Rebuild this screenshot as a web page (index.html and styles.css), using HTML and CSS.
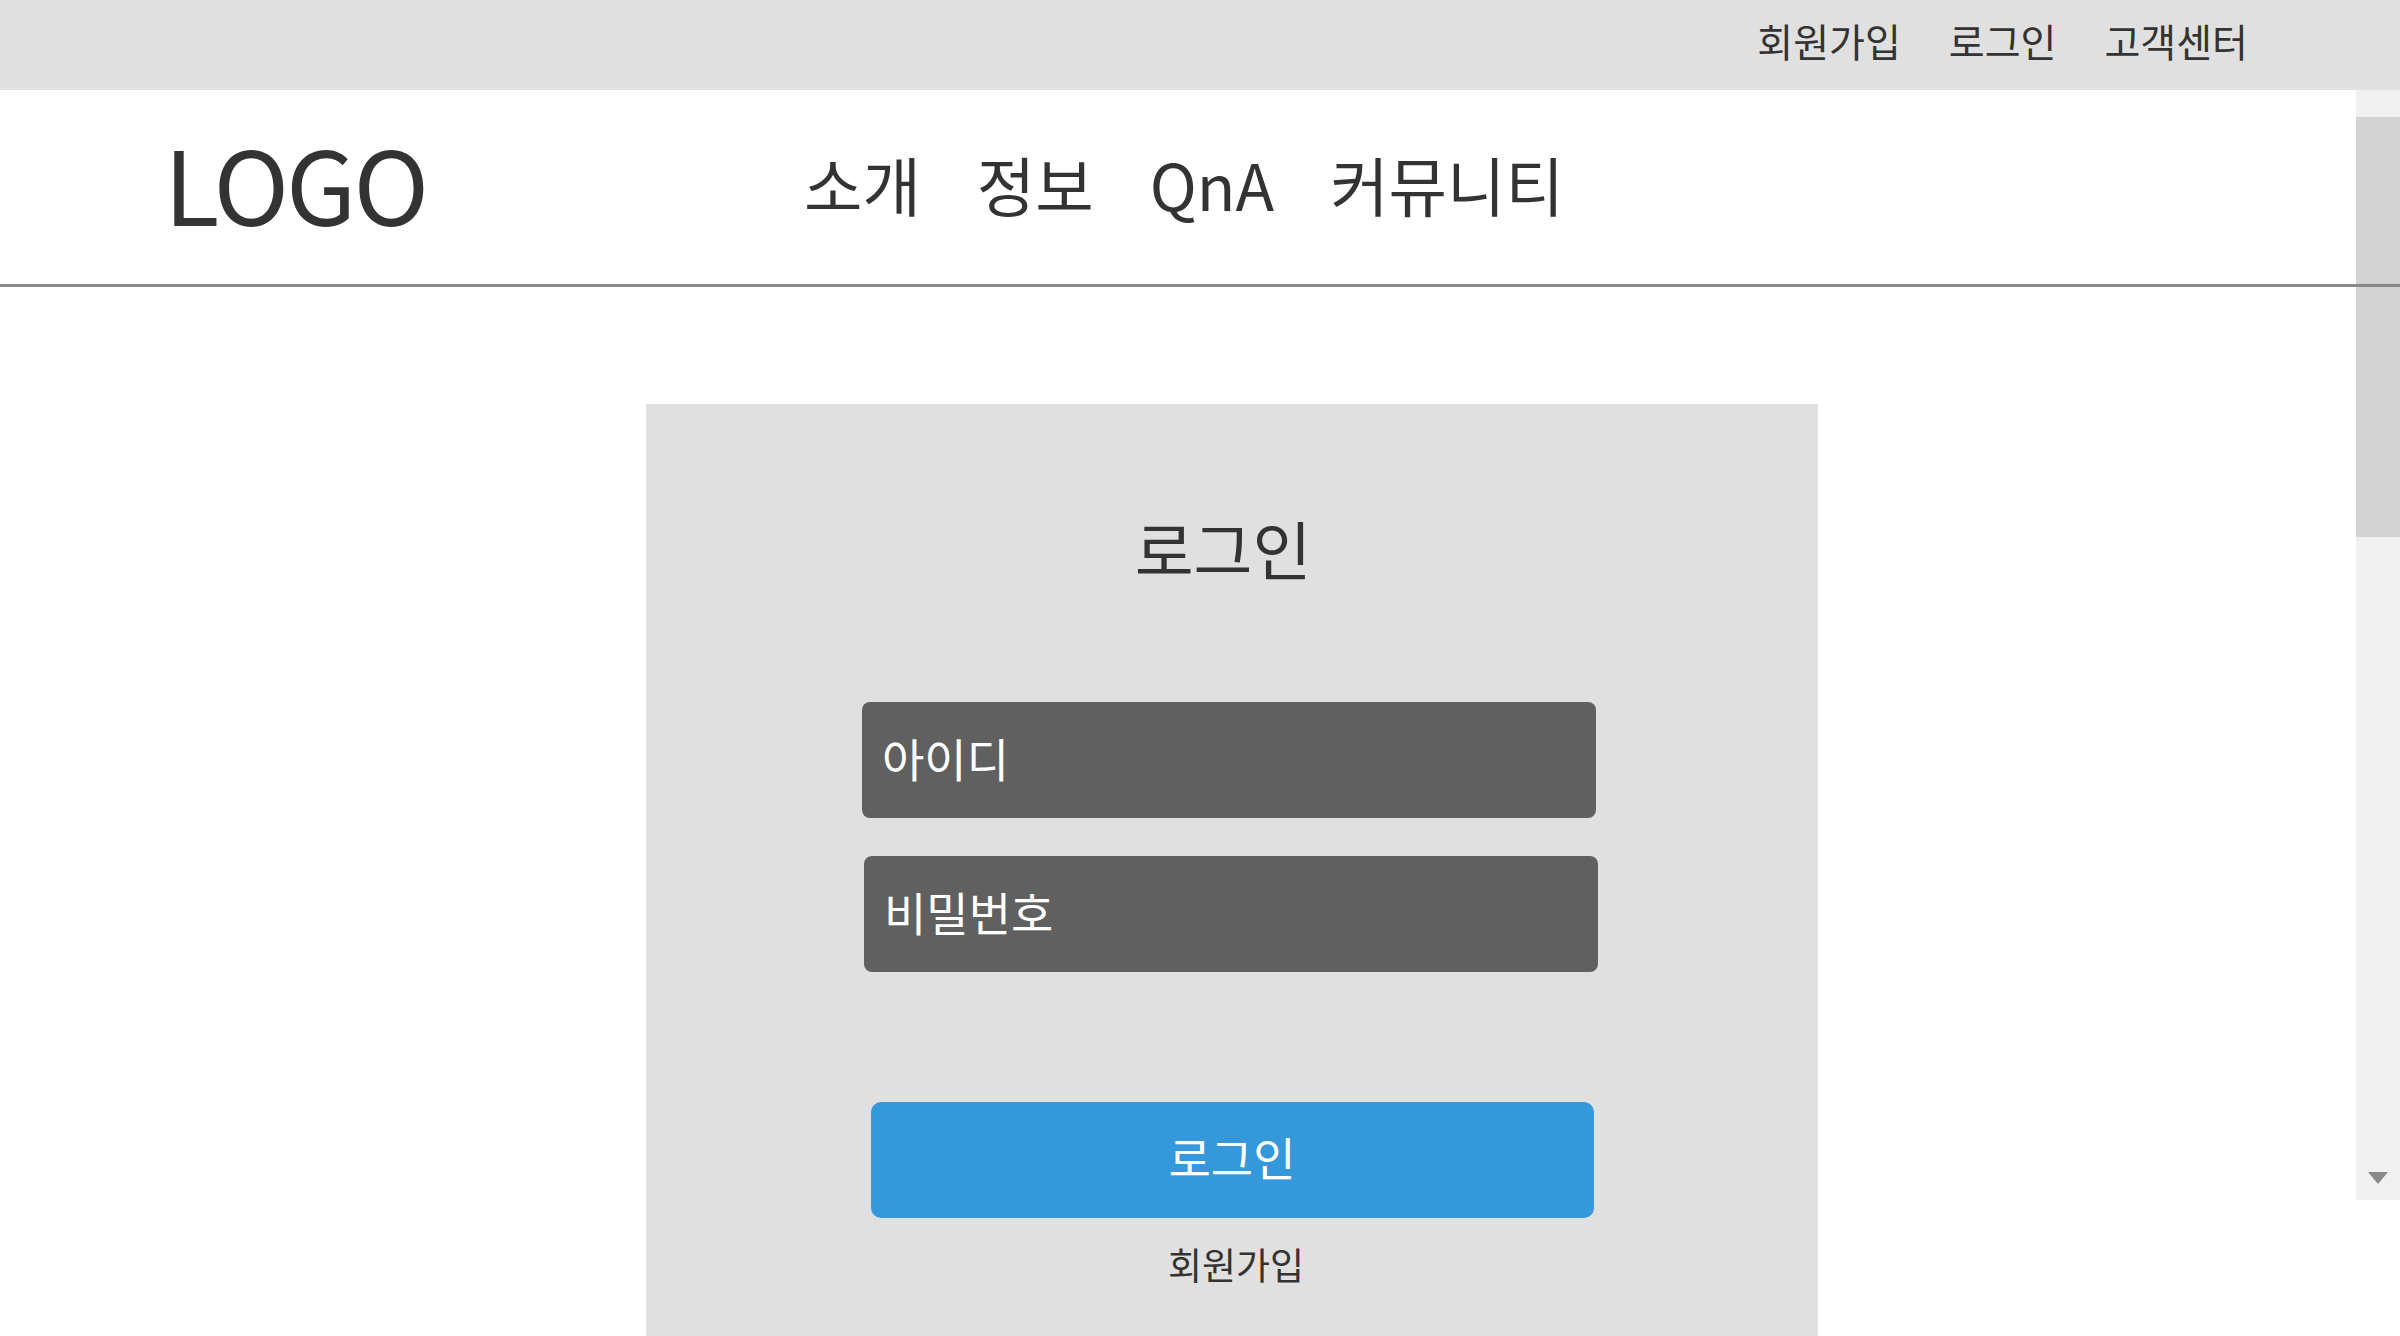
FILE: index.html
```html
<!DOCTYPE html>
<html lang="ko">
<head>
<meta charset="utf-8">
<title>로그인</title>
<link rel="stylesheet" href="styles.css">
</head>
<body>
<div class="topbar">
  <a class="toplink" href="#">회원가입</a>
  <a class="toplink" href="#">로그인</a>
  <a class="toplink" href="#">고객센터</a>
</div>
<header class="header">
  <div class="logo">LOGO</div>
  <nav class="nav">
    <a href="#">소개</a>
    <a href="#">정보</a>
    <a href="#">QnA</a>
    <a href="#">커뮤니티</a>
  </nav>
</header>
<main class="main">
  <section class="card">
    <h1 class="title">로그인</h1>
    <div class="field field-id">아이디</div>
    <div class="field field-pw">비밀번호</div>
    <button class="btn">로그인</button>
    <a class="join" href="#">회원가입</a>
  </section>
</main>
<div class="scrollbar">
  <div class="sb-up"></div>
  <div class="sb-thumb"></div>
  <div class="sb-track"></div>
  <div class="sb-down"><span class="sb-arrow"></span></div>
</div>
</body>
</html>
```
FILE: styles.css
```css
html, body {
  margin: 0;
  padding: 0;
  height: 1336px;
  overflow: hidden;
  background: #ffffff;
}
body {
  font-family: "Noto Sans CJK KR", "Noto Sans", sans-serif;
  color: #333333;
  position: relative;
}
a {
  color: inherit;
  text-decoration: none;
}
.topbar {
  box-sizing: border-box;
  height: 90px;
  background: #e0e0e0;
  display: flex;
  justify-content: flex-end;
  align-items: center;
  gap: 48px;
  padding-right: 152px;
  padding-bottom: 9px;
}
.toplink {
  font-size: 39px;
  line-height: 1;
  color: #333333;
}
.header {
  position: relative;
  z-index: 2;
  box-sizing: border-box;
  height: 197px;
  border-bottom: 3px solid #888888;
  display: flex;
  align-items: center;
  padding-left: 164px;
  padding-bottom: 10px;
}
.logo {
  font-size: 102px;
  letter-spacing: -3px;
  line-height: 1;
  color: #333333;
  width: 640px;
}
.nav {
  display: flex;
  gap: 56px;
  padding-top: 4px;
}
.nav a {
  font-size: 63.5px;
  line-height: 1;
  color: #333333;
}
.main {
  padding-top: 117px;
  padding-left: 646px;
}
.card {
  width: 1172px;
  background: #e0e0e0;
  padding-top: 111px;
  padding-bottom: 200px;
  display: flex;
  flex-direction: column;
  align-items: center;
}
.title {
  margin: 0 18px 0 0;
  font-size: 64px;
  font-weight: 400;
  line-height: 1;
  color: #333333;
}
.field {
  box-sizing: border-box;
  width: 734px;
  height: 116px;
  background: #606060;
  border-radius: 8px;
  color: #ffffff;
  font-size: 46px;
  display: flex;
  align-items: center;
  padding-left: 20px;
  padding-bottom: 6px;
}
.field-id {
  margin-top: 123px;
  margin-left: -6px;
}
.field-pw {
  margin-top: 38px;
  margin-left: -2px;
}
.btn {
  box-sizing: border-box;
  margin-top: 130px;
  width: 723px;
  height: 116px;
  border: none;
  border-radius: 10px;
  background: #3598db;
  color: #ffffff;
  font-family: inherit;
  font-size: 46px;
  padding: 0 0 8px 0;
}
.join {
  margin-top: 28px;
  margin-left: 8px;
  font-size: 37px;
  line-height: 1;
  color: #333333;
}
.scrollbar {
  position: absolute;
  z-index: 1;
  top: 90px;
  right: 0;
  width: 44px;
  height: 1110px;
  display: flex;
  flex-direction: column;
  background: #f0f0f0;
}
.sb-up {
  height: 27px;
  background: #f0f0f0;
}
.sb-thumb {
  height: 420px;
  background: #d3d3d3;
}
.sb-track {
  flex: 1;
}
.sb-down {
  box-sizing: border-box;
  height: 40px;
  display: flex;
  justify-content: center;
  align-items: flex-start;
  padding-top: 12px;
}
.sb-arrow {
  width: 0;
  height: 0;
  border-left: 10px solid transparent;
  border-right: 10px solid transparent;
  border-top: 12px solid #8a8a8a;
}
```
